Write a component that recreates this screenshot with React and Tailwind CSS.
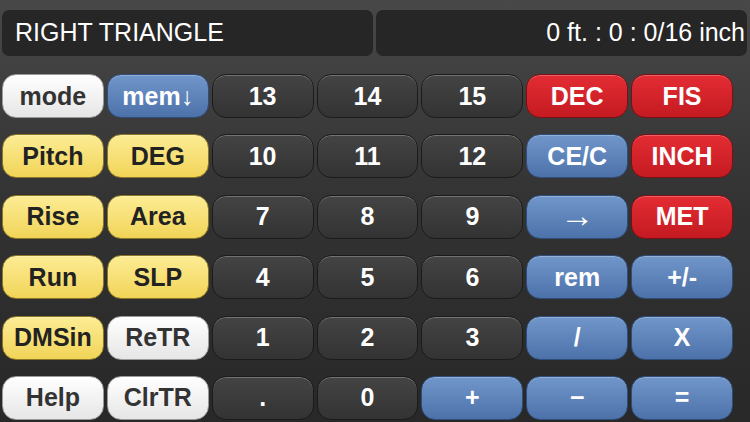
import React from 'react';

const STYLES = {
  white: 'bg-gradient-to-b from-[#ffffff] to-[#e6e6e6] text-[#333333] border-[#9a9a9a]',
  blue: 'bg-gradient-to-b from-[#7096ca] to-[#4d72aa] text-white border-[#2f4d7a]',
  yellow: 'bg-gradient-to-b from-[#fcec93] to-[#f1d456] text-[#222222] border-[#8a7626]',
  red: 'bg-gradient-to-b from-[#e42c33] to-[#c41a21] text-white border-[#7a1015]',
  dark: 'bg-gradient-to-b from-[#444444] to-[#333333] text-white border-[#1b1b1b]',
};

const KEYS = [
  [['mode', 'white'], ['mem↓', 'blue'], ['13', 'dark'], ['14', 'dark'], ['15', 'dark'], ['DEC', 'red'], ['FIS', 'red']],
  [['Pitch', 'yellow'], ['DEG', 'yellow'], ['10', 'dark'], ['11', 'dark'], ['12', 'dark'], ['CE/C', 'blue'], ['INCH', 'red']],
  [['Rise', 'yellow'], ['Area', 'yellow'], ['7', 'dark'], ['8', 'dark'], ['9', 'dark'], ['→', 'blue'], ['MET', 'red']],
  [['Run', 'yellow'], ['SLP', 'yellow'], ['4', 'dark'], ['5', 'dark'], ['6', 'dark'], ['rem', 'blue'], ['+/-', 'blue']],
  [['DMSin', 'yellow'], ['ReTR', 'white'], ['1', 'dark'], ['2', 'dark'], ['3', 'dark'], ['/', 'blue'], ['X', 'blue']],
  [['Help', 'white'], ['ClrTR', 'white'], ['.', 'dark'], ['0', 'dark'], ['+', 'blue'], ['−', 'blue'], ['=', 'blue']],
];

function Key({ label, kind }) {
  const arrow = label === '→';
  return (
    <button
      className={`h-[44px] rounded-[14px] border flex items-center justify-center leading-none shadow-[inset_0_1px_0_rgba(255,255,255,0.25)] ${arrow ? 'font-normal text-[34px] pb-[3px]' : 'font-bold text-[25px]'} ${STYLES[kind]}`}
    >
      {label}
    </button>
  );
}

export default function App() {
  return (
    <div
      className="w-[750px] h-[422px] overflow-hidden bg-gradient-to-b from-[#484848] via-[#323232] to-[#282828]"
      style={{ fontFamily: '"Liberation Sans", Arial, sans-serif' }}
    >
      {/* Displays */}
      <div className="flex gap-[3px] pl-[2px] pt-[10px]">
        <div className="w-[371px] h-[46px] rounded-[7px] bg-[#262626] flex items-center pl-[13px] text-white text-[25px]">
          RIGHT TRIANGLE
        </div>
        <div className="w-[371px] h-[46px] rounded-[7px] bg-[#262626] flex items-center justify-end pr-[2px] text-white text-[25px]">
          0 ft. : 0 : 0/16 inch
        </div>
      </div>

      {/* Keypad */}
      <div className="w-[733px] pl-[2px] pt-[18px] grid grid-cols-7 gap-x-[3px] gap-y-[16.4px]">
        {KEYS.flat().map(([label, kind], i) => (
          <Key key={i} label={label} kind={kind} />
        ))}
      </div>
    </div>
  );
}
